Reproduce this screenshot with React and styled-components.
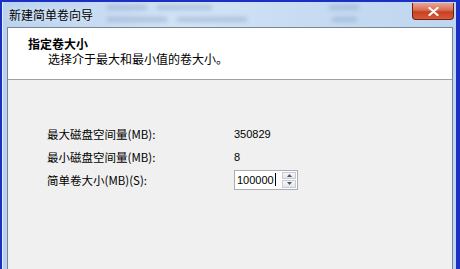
import React from 'react';
import styled, { createGlobalStyle } from 'styled-components';

const Global = createGlobalStyle`
  html, body { margin: 0; padding: 0; background: #1a2fc4; }
  body { font-family: "Noto Sans CJK SC", "Liberation Sans", sans-serif; font-size: 12px; color: #000; }
`;

const Frame = styled.div`
  width: 460px;
  height: 269px;
  box-sizing: border-box;
  padding: 2px 4px 0 2px;
  background: #1a2fc4;
  overflow: hidden;
`;

const Glass = styled.div`
  height: 100%;
  display: flex;
  flex-direction: column;
  background: linear-gradient(90deg, #b9d2ee 0%, #d2e3f5 40%, #c6dbf2 70%, #bfd6f0 100%);
  border-left: 1px solid #e6f0fb;
  padding: 0 3px 0 4px;
`;

const TitleBar = styled.div`
  position: relative;
  height: 25px;
  display: flex;
  align-items: center;
  justify-content: space-between;
`;

const Title = styled.span`
  position: relative;
  z-index: 1;
  padding-left: 2px;
  font-size: 12px;
  color: #000;
  text-shadow: 0 0 6px #eaf3fd;
`;

const Blur = styled.div`
  position: absolute;
  top: ${p => p.$top}px;
  left: ${p => p.$left}px;
  width: ${p => p.$w}px;
  height: 5px;
  background: #8ea8c8;
  filter: blur(2px);
  opacity: 0.5;
`;

const Close = styled.div`
  align-self: flex-start;
  margin: 1px -1px 0 0;
  width: 42px;
  height: 17px;
  border: 1px solid #6b2318;
  border-top: none;
  border-radius: 0 0 4px 4px;
  background: linear-gradient(180deg, #eaa592 0%, #d86f52 45%, #c8401f 55%, #d85a3a 100%);
  display: flex;
  align-items: center;
  justify-content: center;
  box-sizing: border-box;
`;

const Client = styled.div`
  flex: 1;
  border: 1px solid #7a8694;
  border-bottom: none;
  display: flex;
  flex-direction: column;
  background: #f0f0f0;
`;

const Header = styled.div`
  height: 52px;
  background: #fff;
  border-bottom: 1px solid #a0a0a0;
  padding: 8px 0 0 20px;
  box-sizing: border-box;
  line-height: 15px;
`;

const HeadTitle = styled.div`
  font-weight: bold;
`;

const HeadSub = styled.div`
  padding-left: 20px;
`;

const Body = styled.div`
  padding: 42px 0 0 39px;
  display: grid;
  grid-template-columns: 187px auto;
  grid-auto-rows: 23px;
  align-items: center;
`;

const Label = styled.span`
  font-size: 11.5px;
`;

const Value = styled.span`
  font-family: "Liberation Sans", sans-serif;
  font-size: 11px;
`;

const Spin = styled.div`
  display: flex;
  width: 64px;
  height: 20px;
  border: 1px solid #abadb3;
  background: #fff;
  box-sizing: border-box;
`;

const Field = styled.div`
  flex: 1;
  display: flex;
  align-items: center;
  padding-left: 2px;
  font-family: "Liberation Sans", sans-serif;
  font-size: 11px;
`;

const Caret = styled.span`
  display: inline-block;
  width: 1px;
  height: 13px;
  background: #000;
  margin-left: 1px;
`;

const Arrows = styled.div`
  width: 14px;
  display: flex;
  flex-direction: column;
  gap: 1px;
  padding: 1px;
`;

const Arrow = styled.div`
  flex: 1;
  border: 1px solid #c8ccd2;
  background: linear-gradient(180deg, #f6f7f9, #e4e6ea);
  display: flex;
  align-items: center;
  justify-content: center;
`;

const Tri = ({ up }) => (
  <svg width="5" height="3" viewBox="0 0 5 3">
    <path d={up ? 'M2.5 0 L5 3 L0 3 Z' : 'M0 0 L5 0 L2.5 3 Z'} fill="#4a5666" />
  </svg>
);

export default function App() {
  return (
    <>
      <Global />
      <Frame>
        <Glass>
          <TitleBar>
            <Blur $top={3} $left={100} $w={40} />
            <Blur $top={3} $left={150} $w={55} />
            <Blur $top={15} $left={100} $w={60} />
            <Blur $top={15} $left={170} $w={70} />
            <Blur $top={3} $left={322} $w={30} />
            <Blur $top={15} $left={325} $w={25} />
            <Title>新建简单卷向导</Title>
            <Close>
              <svg width="11" height="9" viewBox="0 0 11 9">
                <path d="M1.5 1 L9.5 8 M9.5 1 L1.5 8" stroke="#fff" strokeWidth="2.2" strokeLinecap="round" />
              </svg>
            </Close>
          </TitleBar>
          <Client>
            <Header>
              <HeadTitle>指定卷大小</HeadTitle>
              <HeadSub>选择介于最大和最小值的卷大小。</HeadSub>
            </Header>
            <Body>
              <Label>最大磁盘空间量(MB):</Label>
              <Value>350829</Value>
              <Label>最小磁盘空间量(MB):</Label>
              <Value>8</Value>
              <Label>简单卷大小(MB)(S):</Label>
              <Spin>
                <Field>100000<Caret /></Field>
                <Arrows>
                  <Arrow><Tri up /></Arrow>
                  <Arrow><Tri /></Arrow>
                </Arrows>
              </Spin>
            </Body>
          </Client>
        </Glass>
      </Frame>
    </>
  );
}
